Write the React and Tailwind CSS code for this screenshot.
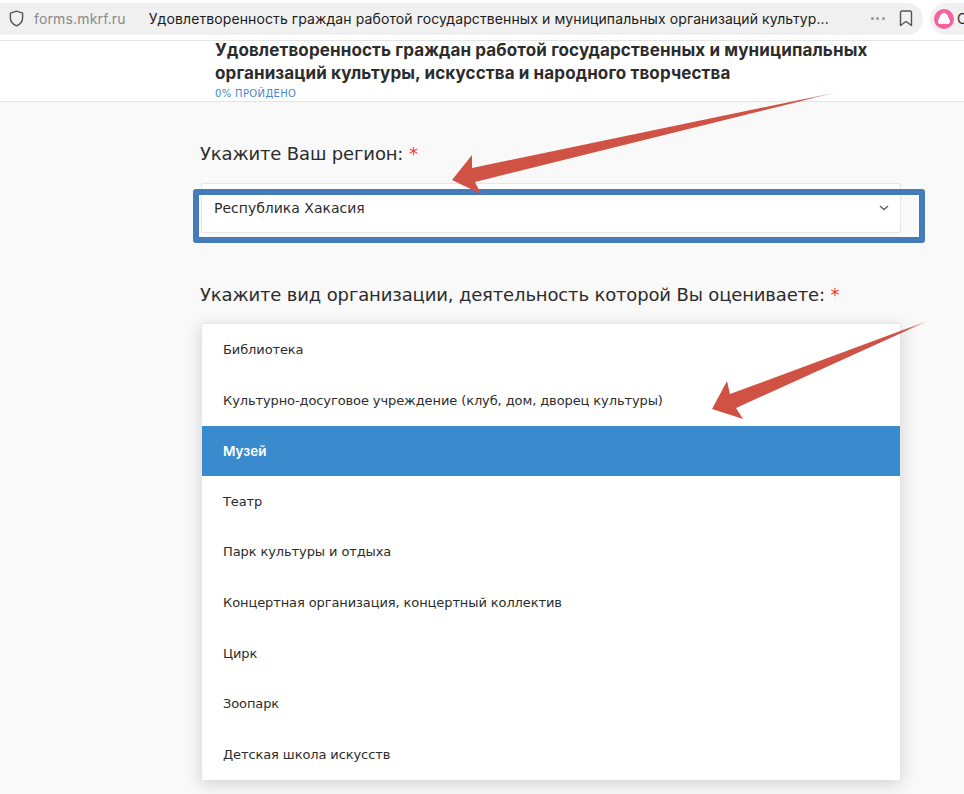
const options = [
  "Библиотека",
  "Культурно-досуговое учреждение (клуб, дом, дворец культуры)",
  "Музей",
  "Театр",
  "Парк культуры и отдыха",
  "Концертная организация, концертный коллектив",
  "Цирк",
  "Зоопарк",
  "Детская школа искусств",
];

function Arrows() {
  return (
    <svg className="absolute left-0 top-0 pointer-events-none" width="964" height="794">
      <defs>
        <linearGradient id="fade1" gradientUnits="userSpaceOnUse" x1="838" y1="92" x2="800" y2="100">
          <stop offset="0" stopColor="#d05244" stopOpacity="0.2" />
          <stop offset="1" stopColor="#d05244" />
        </linearGradient>
        <linearGradient id="fade2" gradientUnits="userSpaceOnUse" x1="930" y1="320" x2="905" y2="330">
          <stop offset="0" stopColor="#d05244" stopOpacity="0.2" />
          <stop offset="1" stopColor="#d05244" />
        </linearGradient>
      </defs>
      <path d="M838 92 L472 168 L472 155 L452 180 L481 194 L475 182 Z" fill="url(#fade1)" />
      <path d="M930 320 L730 394 L727 381 L712 409 L743 419 L736 408 Z" fill="url(#fade2)" />
    </svg>
  );
}

export default function App() {
  return (
    <div className="relative h-[794px] w-[964px] overflow-hidden bg-[#f9f9f9] font-['DejaVu_Sans',sans-serif] text-[#2c2c2c]">
      {/* browser bar */}
      <div className="flex h-[41px] items-center gap-[7px] border-b border-[#e4e4e4] bg-white pb-[5px] pt-[2px] font-['Inter',sans-serif] text-[14px]">
        <div className="flex h-[32px] w-[923px] shrink-0 items-center rounded-r-[16px] bg-[#f0f0f0] pl-[9px]">
          <svg width="15" height="17" viewBox="0 0 15 17" fill="none" stroke="#555" strokeWidth="1.4">
            <path d="M7.5 1.2 L13.6 3.2 V8 C13.6 11.8 11 14.4 7.5 15.8 C4 14.4 1.4 11.8 1.4 8 V3.2 Z" strokeLinejoin="round" />
          </svg>
          <span className="ml-[10px] tracking-[0.15px] text-[#8a8a8a]">forms.mkrf.ru</span>
          <span className="ml-[23px] w-[690px] shrink-0 truncate tracking-[0.1px] text-[#1c1c1c]">
            Удовлетворенность граждан работой государственных и муниципальных организаций культур...
          </span>
          <span className="ml-[32px] flex gap-[2.5px]">
            <i className="size-[3px] rounded-full bg-[#999]" />
            <i className="size-[3px] rounded-full bg-[#999]" />
            <i className="size-[3px] rounded-full bg-[#999]" />
          </span>
          <svg className="ml-[14px]" width="14" height="17" viewBox="0 0 14 17" fill="none" stroke="#555" strokeWidth="1.4">
            <path d="M1.5 2.5 a1.5 1.5 0 0 1 1.5-1.5 h8 a1.5 1.5 0 0 1 1.5 1.5 V15.5 L7 11.5 L1.5 15.5 Z" strokeLinejoin="round" />
          </svg>
        </div>
        <div className="flex h-[32px] w-[60px] shrink-0 items-center rounded-l-[16px] bg-[#f0f0f0] pl-[4px]">
          <svg width="20" height="20" viewBox="0 0 20 20">
            <circle cx="10" cy="10" r="10" fill="#f4619c" />
            <path d="M10 3.8 C7.2 3.8 6 7.5 4.4 10.8 C3.2 13.6 4.8 15.6 7.2 15 C9 14.6 11 14.6 12.8 15 C15.2 15.6 16.8 13.6 15.6 10.8 C14 7.5 12.8 3.8 10 3.8 Z" fill="#fff" />
          </svg>
          <span className="ml-[3px]">С</span>
        </div>
      </div>

      {/* header */}
      <div className="flex h-[61px] flex-col border-b border-[#e4e4e4] bg-white pl-[215px]">
        <h1 className="-mt-[2px] font-['Inter',sans-serif] text-[17px] font-bold leading-[23px] tracking-[0.12px]">
          Удовлетворенность граждан работой государственных и муниципальных
          <br />
          организаций культуры, искусства и народного творчества
        </h1>
        <p className="mt-[2px] text-[10px] leading-[14px] tracking-[0.35px] text-[#4a86d0]">0% ПРОЙДЕНО</p>
      </div>

      {/* form */}
      <div className="ml-[201px] w-[700px]">
        <p className="-ml-[1px] mt-[40px] text-[18px] leading-[24px] tracking-[-0.15px]">
          Укажите Ваш регион: <span className="text-[#f03a2e]">*</span>
        </p>
        <div className="mt-[17px] flex h-[50px] items-center justify-between rounded-[2px] border border-[#e6e6e6] bg-white pl-[12px] pr-[11px] text-[14px]">
          <span>Республика Хакасия</span>
          <svg width="10" height="6" viewBox="0 0 10 6" fill="none" stroke="#666" strokeWidth="1.6">
            <path d="M1 1l4 3.5L9 1" />
          </svg>
        </div>
        <p className="-ml-[1px] mt-[50px] text-[18px] leading-[24px] tracking-[-0.15px]">
          Укажите вид организации, деятельность которой Вы оцениваете: <span className="text-[#f03a2e]">*</span>
        </p>
        <ul className="mt-[16px] border-x border-t border-[#e6e6e6] bg-white pt-[0.5px] shadow-[0_4px_16px_rgba(0,0,0,0.16)]">
          {options.map((o) => (
            <li
              key={o}
              className={
                o === "Музей"
                  ? "flex h-[50.6px] items-center bg-[#3a8bce] pl-[21px] font-['Inter',sans-serif] text-[13.5px] font-semibold text-white"
                  : "flex h-[50.6px] items-center pl-[21px] text-[13px] tracking-[-0.1px]"
              }
            >
              {o}
            </li>
          ))}
        </ul>
      </div>

      {/* annotations */}
      <div className="absolute left-[193px] top-[189px] h-[54px] w-[732px] rounded-[3px] border-[6px] border-[#437cb8]" />
      <Arrows />
    </div>
  );
}
